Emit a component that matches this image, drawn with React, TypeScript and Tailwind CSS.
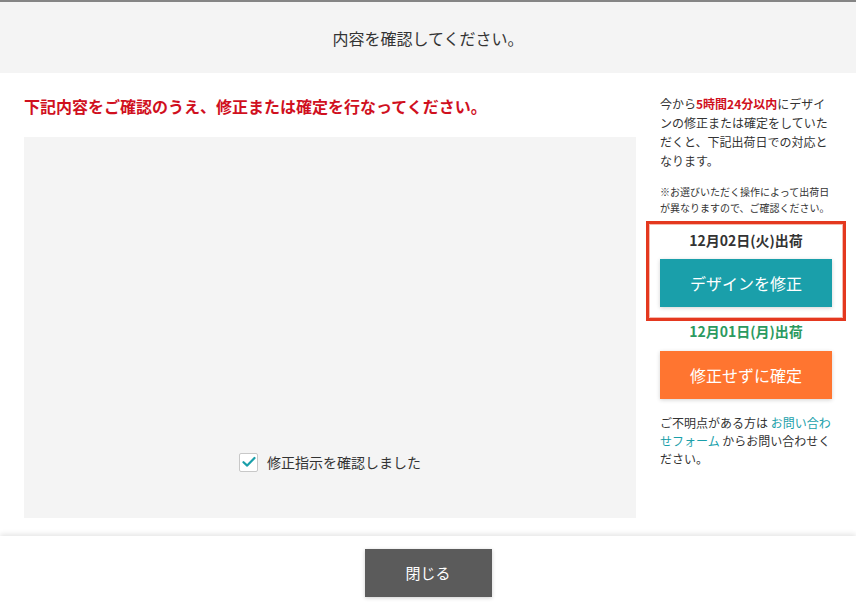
import React from "react";

export default function App() {
  return (
    <div
      className="w-[856px] h-[609px] flex flex-col bg-white text-[#333333] overflow-hidden"
      style={{ fontFamily: '"Noto Sans CJK JP", "Noto Sans", sans-serif' }}
    >
      <div className="h-[73px] shrink-0 border-t-2 border-[#858585] bg-[#f4f4f4] flex items-center justify-center text-[16px] text-[#333333]">
        内容を確認してください。
      </div>

      <main className="flex-1 flex px-[24px] pt-[21px] pb-[18px] min-h-0">
        <div className="w-[612px] flex flex-col">
          <h2 className="text-[16px] leading-[24px] font-bold text-[#d0101e]">
            下記内容をご確認のうえ、修正または確定を行なってください。
          </h2>
          <div className="mt-[19px] flex-1 bg-[#f4f4f4] flex items-end justify-center pb-[46px]">
            <label className="flex items-center gap-[9px] text-[14px] leading-[20px] text-[#333333]">
              <span className="w-[19px] h-[19px] bg-white border border-[#c8c8c8] rounded-[2px] flex items-center justify-center">
                <svg width="14" height="12" viewBox="0 0 14 12" fill="none">
                  <path d="M1.5 6.2 L5.2 9.6 L12.5 2" stroke="#1a9faa" strokeWidth="2.2" strokeLinecap="round" strokeLinejoin="round" />
                </svg>
              </span>
              修正指示を確認しました
            </label>
          </div>
        </div>

        <div className="ml-[24px] w-[172px] flex flex-col">
          <p className="text-[12px] leading-[19px] text-[#333333]">
            今から<span className="font-bold text-[#d0101e]">5時間24分以内</span>にデザインの修正または確定をしていただくと、下記出荷日での対応となります。
          </p>
          <p className="mt-[14px] text-[10px] leading-[16px] text-[#333333]">
            ※お選びいただく操作によって出荷日が異なりますので、ご確認ください。
          </p>
          <div className="mt-[5px] -mx-[14px] border-[3px] border-[#e4381f] shadow-[inset_0_0_0_1px_#f6b9ae] px-[11px] pt-[6px] pb-[11px] flex flex-col">
            <div className="text-center text-[14px] leading-[20px] font-bold text-[#333333]">
              12月02日(火)出荷
            </div>
            <button className="mt-[9px] h-[48px] w-full bg-[#1a9faa] text-white text-[16px] shadow-[0_1px_4px_rgba(0,0,0,0.18)]">
              デザインを修正
            </button>
          </div>
          <div className="text-center text-[14px] leading-[20px] font-bold text-[#2b9a5f]">
            12月01日(月)出荷
          </div>
          <button className="mt-[10px] h-[48px] w-full bg-[#ff7530] text-white text-[16px] shadow-[0_1px_4px_rgba(0,0,0,0.18)]">
            修正せずに確定
          </button>
          <p className="mt-[15px] text-[12px] leading-[18px] text-[#333333]">
            ご不明点がある方は <span className="text-[#1a9faa]">お問い合わせフォーム</span> からお問い合わせください。
          </p>
        </div>
      </main>

      <footer className="h-[73px] shrink-0 bg-white shadow-[0_-2px_5px_rgba(0,0,0,0.1)] flex justify-center pt-[13px] relative">
        <button className="w-[127px] h-[48px] bg-[#5b5b5b] text-white text-[15px] shadow-[0_1px_4px_rgba(0,0,0,0.2)]">
          閉じる
        </button>
      </footer>
    </div>
  );
}
